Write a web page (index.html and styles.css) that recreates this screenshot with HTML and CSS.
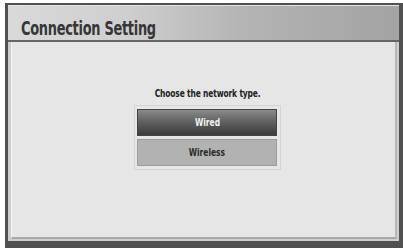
FILE: index.html
```html
<!DOCTYPE html>
<html>
<head>
<meta charset="utf-8">
<link rel="stylesheet" href="styles.css">
</head>
<body>
<div class="screen">
  <div class="header"><h1 class="title">Connection Setting</h1></div>
  <div class="body">
    <div class="panel">
      <p class="prompt">Choose the network type.</p>
      <div class="choices">
        <div class="btn btn-active"><span class="label">Wired</span></div>
        <div class="btn"><span class="label">Wireless</span></div>
      </div>
    </div>
  </div>
</div>
</body>
</html>
```
FILE: styles.css
```css
html, body { margin: 0; padding: 0; background: #fff; }
body { width: 403px; height: 248px; overflow: hidden; }
.screen {
  box-sizing: border-box;
  margin: 3px 0 0 5px;
  width: 398px;
  height: 245px;
  border-style: solid;
  border-color: #505050;
  border-width: 2px 4px 7px 3px;
  display: flex;
  flex-direction: column;
  background: #c8c8c8;
}
.header {
  box-sizing: border-box;
  height: 37px;
  border-top: 1px solid #e4e4e4;
  border-bottom: 2px solid #666;
  background: linear-gradient(90deg, #d9d9d9 0%, #cfcfcf 30%, #b4b4b4 60%, #a3a3a3 100%);
  padding-left: 13px;
  display: flex;
  align-items: center;
}
.title {
  margin: 9px 0 0 0;
  font-family: "DejaVu Sans Condensed", "Liberation Sans", sans-serif;
  font-weight: bold;
  font-size: 20px;
  letter-spacing: -0.4px;
  color: #363636;
  transform: scaleX(0.72);
  transform-origin: left center;
  white-space: nowrap;
}
.body {
  flex: 1;
  box-sizing: border-box;
  padding: 0 2px 2px 3px;
  background: #cdcdcd;
  display: flex;
}
.panel {
  flex: 1;
  box-sizing: border-box;
  border-left: 1px solid #f4f4f4;
  border-right: 2px solid #b8b8b8;
  border-bottom: 2px solid #a8a8a8;
  background: #e6e6e6;
  display: flex;
  flex-direction: column;
  align-items: center;
  padding-left: 8px;
}
.prompt {
  margin: 45px 0 0 0;
  font-family: "DejaVu Sans Condensed", "Liberation Sans", sans-serif;
  font-weight: bold;
  font-size: 11px;
  color: #222;
  letter-spacing: -0.2px;
  transform: scaleX(0.76);
  white-space: nowrap;
}
.choices {
  margin-top: 5px;
  padding: 3px 3px 3px 2px;
  border: 1px solid #d4d4d4;
  display: flex;
  flex-direction: column;
  gap: 3px;
}
.btn {
  box-sizing: border-box;
  width: 140px;
  height: 27px;
  display: flex;
  align-items: center;
  justify-content: center;
  font-family: "DejaVu Sans Condensed", "Liberation Sans", sans-serif;
  font-weight: bold;
  font-size: 11px;
  color: #2a2a2a;
  background: #b2b2b2;
  border: 1px solid #9c9c9c;
}
.label {
  display: inline-block;
  transform: scaleX(0.76);
  white-space: nowrap;
}
.btn-active {
  color: #f2f2f2;
  background: linear-gradient(#8a8a8a, #5e5e5e 50%, #3c3c3c);
  border: 1px solid #444;
}
```
